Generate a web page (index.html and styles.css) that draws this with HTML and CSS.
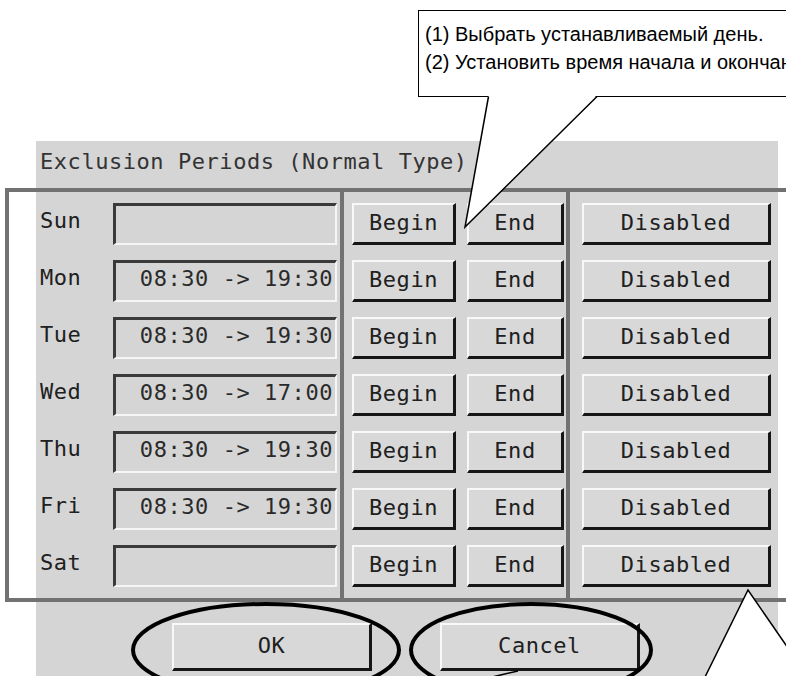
FILE: index.html
```html
<!DOCTYPE html>
<html lang="en">
<head>
<meta charset="utf-8">
<title>Exclusion Periods</title>
<link rel="stylesheet" href="styles.css">
</head>
<body>
<div class="stage">
  <div class="callout">
    <p class="callout-line">(1) Выбрать устанавливаемый день.</p>
    <p class="callout-line">(2) Установить время начала и окончания.</p>
  </div>

  <div class="panel">
    <div class="title">Exclusion Periods (Normal Type)</div>
    <div class="rows">
      <div class="row">
        <span class="day">Sun</span>
        <div class="field"></div>
        <div class="btn btn-begin">Begin</div>
        <div class="btn btn-end">End</div>
        <div class="btn btn-disabled">Disabled</div>
      </div>
      <div class="row">
        <span class="day">Mon</span>
        <div class="field">08:30 -&gt; 19:30</div>
        <div class="btn btn-begin">Begin</div>
        <div class="btn btn-end">End</div>
        <div class="btn btn-disabled">Disabled</div>
      </div>
      <div class="row">
        <span class="day">Tue</span>
        <div class="field">08:30 -&gt; 19:30</div>
        <div class="btn btn-begin">Begin</div>
        <div class="btn btn-end">End</div>
        <div class="btn btn-disabled">Disabled</div>
      </div>
      <div class="row">
        <span class="day">Wed</span>
        <div class="field">08:30 -&gt; 17:00</div>
        <div class="btn btn-begin">Begin</div>
        <div class="btn btn-end">End</div>
        <div class="btn btn-disabled">Disabled</div>
      </div>
      <div class="row">
        <span class="day">Thu</span>
        <div class="field">08:30 -&gt; 19:30</div>
        <div class="btn btn-begin">Begin</div>
        <div class="btn btn-end">End</div>
        <div class="btn btn-disabled">Disabled</div>
      </div>
      <div class="row">
        <span class="day">Fri</span>
        <div class="field">08:30 -&gt; 19:30</div>
        <div class="btn btn-begin">Begin</div>
        <div class="btn btn-end">End</div>
        <div class="btn btn-disabled">Disabled</div>
      </div>
      <div class="row">
        <span class="day">Sat</span>
        <div class="field"></div>
        <div class="btn btn-begin">Begin</div>
        <div class="btn btn-end">End</div>
        <div class="btn btn-disabled">Disabled</div>
      </div>
    </div>
    <div class="actions">
      <div class="btn btn-big">OK</div>
      <div class="btn btn-big btn-cancel">Cancel</div>
    </div>
  </div>

  <svg class="annot" width="786" height="676" viewBox="0 0 786 676">
    <rect x="7" y="190" width="900" height="410" fill="none" stroke="#727272" stroke-width="4"/>
    <line x1="342" y1="190" x2="342" y2="600" stroke="#727272" stroke-width="4"/>
    <line x1="568" y1="190" x2="568" y2="600" stroke="#727272" stroke-width="4"/>

    <polygon points="488.5,95 597,95 465,227" fill="#fff"/>
    <polyline points="488.5,96.5 465,227 597,96.5" fill="none" stroke="#000" stroke-width="1.5"/>

    <polygon points="748,590 705,677 790,677 790,651" fill="#fff"/>
    <polyline points="705,677 748,590 790,651" fill="none" stroke="#000" stroke-width="1.5"/>

    <ellipse cx="266" cy="650" rx="133" ry="46" fill="none" stroke="#000" stroke-width="4"/>
    <ellipse cx="531" cy="650" rx="120" ry="46" fill="none" stroke="#000" stroke-width="4"/>
    <line x1="492" y1="677" x2="518" y2="671" stroke="#000" stroke-width="1.5"/>
  </svg>
</div>
</body>
</html>
```
FILE: styles.css
```css
html, body {
  margin: 0;
  padding: 0;
  background: #ffffff;
}

.stage {
  position: relative;
  width: 786px;
  height: 676px;
  overflow: hidden;
  background: #ffffff;
}

.callout {
  box-sizing: border-box;
  margin: 10px 0 0 418px;
  width: 420px;
  height: 87px;
  padding: 9px 0 0 6px;
  border: 1.5px solid #000;
  background: #fff;
  font-family: "Liberation Sans", Arial, sans-serif;
  font-size: 20px;
  line-height: 28px;
  color: #000;
  white-space: nowrap;
}

.callout-line {
  margin: 0;
}

.panel {
  box-sizing: border-box;
  margin: 44px 0 0 36px;
  width: 742px;
  height: 600px;
  padding-left: 4px;
  background: #d5d5d5;
  font-family: "DejaVu Sans Mono", "Liberation Mono", monospace;
  font-size: 22px;
  letter-spacing: 0.55px;
  color: #202020;
}

.title {
  height: 42px;
  line-height: 42px;
  color: #333;
  white-space: nowrap;
}

.rows {
  margin-top: 20px;
  display: flex;
  flex-direction: column;
  gap: 15px;
}

.row {
  display: flex;
  align-items: flex-start;
  height: 42px;
}

.day {
  width: 73px;
  line-height: 36px;
  white-space: nowrap;
}

.field {
  box-sizing: border-box;
  width: 224px;
  height: 42px;
  border-top: 3px solid #3a3a3a;
  border-left: 3px solid #3a3a3a;
  border-bottom: 2px solid #f6f6f6;
  border-right: 2px solid #f6f6f6;
  padding-right: 2px;
  text-align: right;
  line-height: 32px;
  white-space: nowrap;
  color: #2a2a2a;
}

.btn {
  box-sizing: border-box;
  height: 42px;
  border-top: 2px solid #f8f8f8;
  border-left: 2px solid #f8f8f8;
  border-bottom: 3px solid #161616;
  border-right: 3px solid #161616;
  background: #d8d8d8;
  text-align: center;
  line-height: 36px;
  white-space: nowrap;
}

.btn-begin {
  width: 104px;
  margin-left: 15px;
}

.btn-end {
  width: 97px;
  margin-left: 11px;
}

.btn-disabled {
  width: 189px;
  margin-left: 18px;
}

.actions {
  display: flex;
  margin: 36px 0 0 132px;
}

.btn-big {
  width: 200px;
  height: 48px;
  line-height: 42px;
}

.btn-cancel {
  margin-left: 68px;
}

.annot {
  position: absolute;
  left: 0;
  top: 0;
  pointer-events: none;
}
```
